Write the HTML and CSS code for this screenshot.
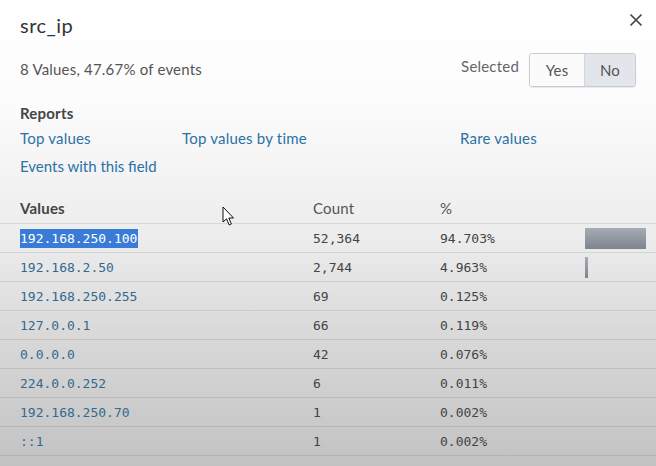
FILE: index.html
```html
<!DOCTYPE html>
<html>
<head>
<meta charset="utf-8">
<link rel="stylesheet" href="styles.css">
</head>
<body>
<div class="panel">
  <div class="top">
    <h1 class="title">src_ip</h1>
    <svg class="close" width="12" height="12" viewBox="0 0 12 12"><path d="M1 1 L11 11 M11 1 L1 11" stroke="#444" stroke-width="1.7" stroke-linecap="round" fill="none"/></svg>
  </div>
  <div class="meta">
    <div class="summary">8 Values, 47.67% of events</div>
    <div class="selected">
      <span class="sel-label">Selected</span>
      <div class="toggle">
        <span class="seg">Yes</span>
        <span class="seg seg-on">No</span>
      </div>
    </div>
  </div>
  <div class="reports">
    <div class="reports-title">Reports</div>
    <div class="links">
      <a class="link">Top values</a>
      <a class="link">Top values by time</a>
      <a class="link">Rare values</a>
      <a class="link link-tight">Events with this field</a>
    </div>
  </div>
  <div class="table">
    <div class="row head-row">
      <span class="th">Values</span><span class="th th-light">Count</span><span class="th th-light">%</span><span></span>
    </div>
    <div class="row"><span class="val"><span class="hl">192.168.250.100</span></span><span class="num">52,364</span><span class="num">94.703%</span><span class="barcell"><span class="bar" style="width:61px"></span></span></div>
    <div class="row"><span class="val">192.168.2.50</span><span class="num">2,744</span><span class="num">4.963%</span><span class="barcell"><span class="bar" style="width:3px"></span></span></div>
    <div class="row"><span class="val">192.168.250.255</span><span class="num">69</span><span class="num">0.125%</span><span></span></div>
    <div class="row"><span class="val">127.0.0.1</span><span class="num">66</span><span class="num">0.119%</span><span></span></div>
    <div class="row"><span class="val">0.0.0.0</span><span class="num">42</span><span class="num">0.076%</span><span></span></div>
    <div class="row"><span class="val">224.0.0.252</span><span class="num">6</span><span class="num">0.011%</span><span></span></div>
    <div class="row"><span class="val">192.168.250.70</span><span class="num">1</span><span class="num">0.002%</span><span></span></div>
    <div class="row"><span class="val">::1</span><span class="num">1</span><span class="num">0.002%</span><span></span></div>
  </div>
  <svg class="cursor" width="14" height="21" viewBox="0 0 14 21"><path d="M1 1 L1 16 L4.5 12.8 L7.2 19 L9.4 18 L6.8 12 L11.5 12 Z" fill="#fff" stroke="#111" stroke-width="1" stroke-linejoin="round"/></svg>
</div>
</body>
</html>
```

FILE: styles.css
```css
html, body {
  margin: 0;
  padding: 0;
}
body {
  width: 656px;
  height: 466px;
  overflow: hidden;
  font-family: Lato, "Open Sans", sans-serif;
  letter-spacing: 0.2px;
  color: #333;
  background: linear-gradient(to bottom, #ffffff 0px, #fcfcfc 100px, #ececec 240px, #d6d6d6 350px, #c2c2c2 466px);
}
.panel {
  position: relative;
  height: 466px;
}
.top {
  display: flex;
  justify-content: space-between;
  align-items: flex-start;
  padding: 13px 14px 0 20px;
}
.title {
  margin: 0;
  font-size: 20px;
  line-height: 24px;
  font-weight: 400;
  letter-spacing: 0.5px;
  color: #333;
}
.close {
  margin-top: 1px;
}
.meta {
  display: flex;
  justify-content: space-between;
  align-items: flex-start;
  margin-top: 16px;
  padding: 0 20px 0 20px;
}
.summary {
  font-size: 15px;
  line-height: 20px;
  margin-top: 6px;
  color: #555;
}
.selected {
  display: flex;
  align-items: flex-start;
}
.sel-label {
  font-size: 15px;
  line-height: 20px;
  margin-top: 3px;
  margin-right: 10px;
  color: #666;
}
.toggle {
  display: flex;
  height: 32px;
  border: 1px solid #c8ccd1;
  border-radius: 3px;
  overflow: hidden;
  box-shadow: 0 1px 1px rgba(0,0,0,0.08);
}
.seg {
  display: flex;
  align-items: center;
  justify-content: center;
  width: 54px;
  font-size: 15px;
  color: #555;
  background: #fbfbfb;
}
.seg-on {
  width: 50px;
  border-left: 1px solid #d3d7dc;
  background: #e2e6eb;
}
.reports {
  margin-top: 16px;
  padding-left: 20px;
}
.reports-title {
  font-size: 15px;
  line-height: 20px;
  font-weight: 700;
  color: #444;
}
.links {
  display: grid;
  grid-template-columns: 162px 278px auto;
  row-gap: 8px;
  margin-top: 5px;
}
.link {
  font-size: 15px;
  line-height: 20px;
  color: #2a72a6;
}
.link-tight {
  letter-spacing: 0;
}
.table {
  margin-top: 19px;
}
.row {
  display: grid;
  grid-template-columns: 293px 127px 145px 1fr;
  align-items: center;
  height: 28px;
  padding-left: 20px;
  border-bottom: 1px solid rgba(0,0,0,0.09);
}
.head-row {
  height: 26px;
  padding-bottom: 2px;
}
.th {
  font-size: 15px;
  font-weight: 700;
  color: #444;
}
.th-light {
  font-weight: 400;
  color: #555;
}
.val, .num {
  font-family: "DejaVu Sans Mono", "Liberation Mono", monospace;
  font-size: 13px;
  line-height: 19px;
  letter-spacing: 0;
}
.val {
  color: #34698f;
}
.num {
  color: #444;
}
.hl {
  display: inline-block;
  background: #3a7bd8;
  color: #fff;
  line-height: 19px;
  padding-right: 1px;
}
.barcell {
  display: flex;
  align-items: center;
}
.bar {
  display: block;
  height: 21px;
  background: linear-gradient(to bottom, #a6abb5, #7e848e);
}
.cursor {
  position: absolute;
  left: 222px;
  top: 206px;
}
```
